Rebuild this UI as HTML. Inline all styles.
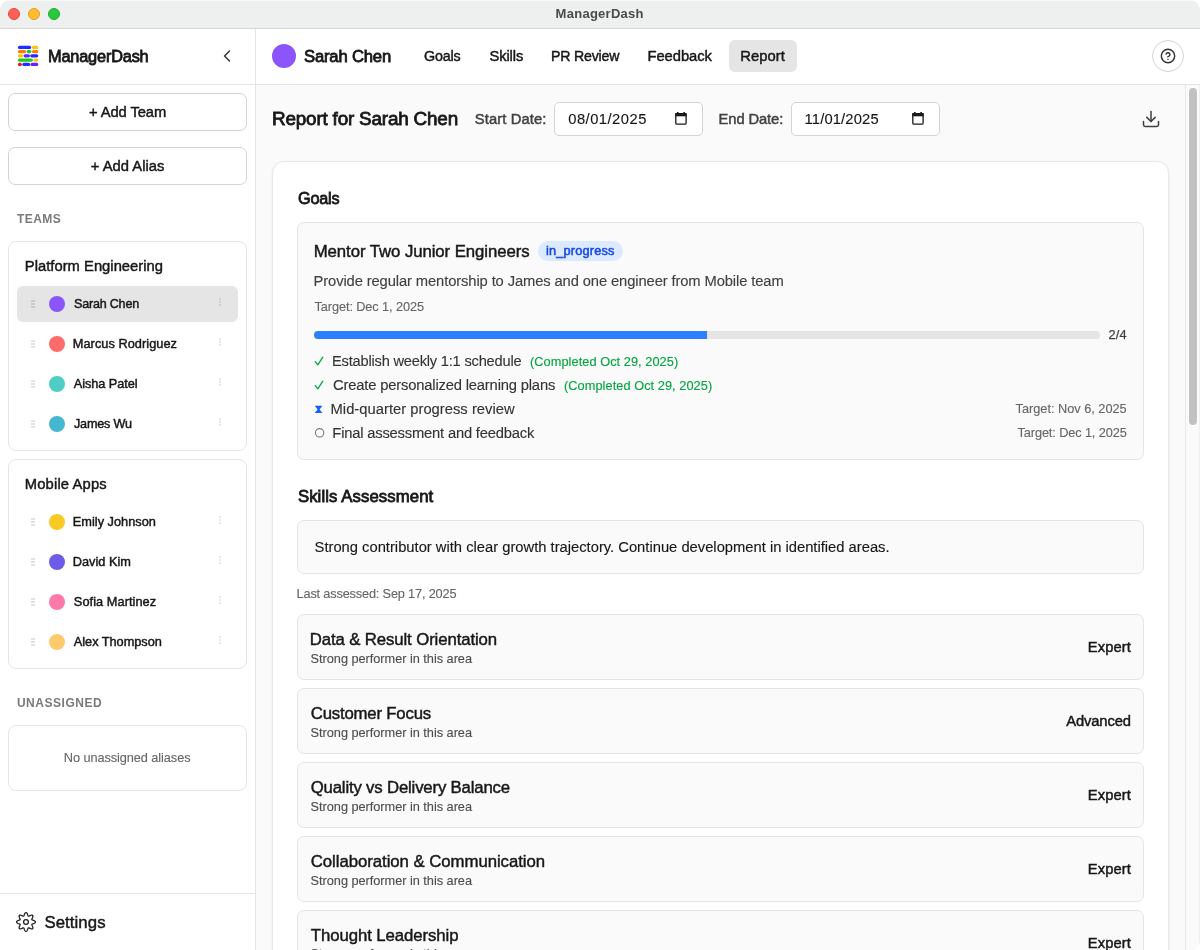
<!DOCTYPE html>
<html><head><meta charset="utf-8"><title>ManagerDash</title>
<style>
html,body{margin:0;padding:0;background:#fff;}
body{width:1200px;height:950px;overflow:hidden;font-family:"Liberation Sans",sans-serif;}
#win{will-change:transform;position:absolute;left:0;top:0;width:1200px;height:950px;overflow:hidden;border-radius:10px;background:#fff;}
#win div,#win svg,#win span{position:absolute;box-sizing:border-box;}
.t{transform-origin:0 0;white-space:nowrap;line-height:1;font-family:"Liberation Sans",sans-serif;}
#tb{left:0;top:0;width:1200px;height:28px;background:#eef0ef;box-shadow:inset 0 1px 0 rgba(255,255,255,0.55);}
#tbl{left:0;top:28px;width:1200px;height:1px;background:#d4d5d5;}
.tl{top:8px;width:12px;height:12px;border-radius:50%;}
#side{left:0;top:29px;width:256px;height:921px;background:#fff;border-right:1px solid #e5e5e5;}
#sideh{left:0;top:84px;width:255px;height:1px;background:#e5e5e5;}
#sidef{left:0;top:893px;width:255px;height:1px;background:#e5e5e5;}
.btn{left:8px;width:239px;height:38px;border:1px solid #d4d4d4;border-radius:7px;background:#fff;}
.card{left:8px;width:239px;border:1px solid #e5e5e5;border-radius:8px;background:#fff;}
.av{width:16px;height:16px;border-radius:50%;left:49px;}
.grip{left:31px;width:4px;height:2px;background:rgba(0,0,0,0.115);}
.dot{left:219px;width:2px;height:2px;background:rgba(0,0,0,0.1);border-radius:0.5px;}
#sel{left:17px;top:286px;width:221px;height:36px;border-radius:6px;background:#e5e5e5;}
#mainh{left:256px;top:29px;width:944px;height:55px;background:#fff;}
#mainhl{left:256px;top:84px;width:944px;height:1px;background:#e5e5e5;}
#main{left:256px;top:85px;width:944px;height:865px;background:#fafafa;}
#sbt{left:1185px;top:85px;width:15px;height:865px;background:#fafafa;border-left:1px solid #e8e8e8;border-right:1px solid #efefef;}
#sbh{left:1189px;top:88px;width:8px;height:337px;border-radius:4px;background:#c1c1c1;box-shadow:0 0 0 1px rgba(255,255,255,0.7);}
#rep{left:729px;top:40px;width:68px;height:32px;border-radius:6px;background:#e5e5e5;}
#help{left:1152px;top:40px;width:32px;height:32px;border-radius:50%;border:1px solid #d4d4d4;background:#fff;}
.inp{top:102px;width:149px;height:34px;border:1px solid #d4d4d4;border-radius:5px;background:#fff;}
#bigcard{left:272px;top:161px;width:897px;height:900px;border:1px solid #e8e8e8;border-radius:12px;background:#fff;box-shadow:0 1px 3px rgba(0,0,0,0.07),0 1px 2px -1px rgba(0,0,0,0.07);}
.sub{left:297px;width:847px;border:1px solid #e5e5e5;border-radius:7px;background:#fafafa;}
#pbar{left:314px;top:331px;width:786px;height:8px;border-radius:4px;background:#e5e5e5;}
#pfill{left:314px;top:331px;width:393px;height:8px;border-radius:4px 0 0 4px;background:#2b7fff;}
#badge{left:538px;top:241px;width:85px;height:20px;border-radius:10px;background:#dbeafe;}

</style></head>
<body>
<div id="win">
<div id="tb"></div><div id="tbl"></div>
<div class="tl" style="left:8px;background:#fe5f57;border:0.5px solid #e2463f"></div>
<div class="tl" style="left:28px;background:#febc2e;border:0.5px solid #dfa023"></div>
<div class="tl" style="left:48px;background:#28c840;border:0.5px solid #1dad2b"></div>
<div id="side"></div><div id="sideh"></div><div id="sidef"></div>
<!-- logo -->
<svg style="left:17px;top:45px" width="22" height="22" viewBox="17 45 22 22">
 <g stroke-width="3.2" stroke-linecap="round" fill="none">
  <path d="M19.5 47.4H29.6" stroke="#1f2dff"/><path d="M33.5 47.4H36.7" stroke="#ffc400"/>
  <path d="M19.5 51.6H24.5" stroke="#ff7a00"/><path d="M28.2 51.6H29.8" stroke="#1fc91f"/><path d="M33.5 51.6H36.7" stroke="#ff7a00"/>
  <path d="M19.5 55.850H21.7" stroke="#ffc400"/><path d="M25.2 55.850H28.4" stroke="#6a1fff"/><path d="M31.8 55.850H36.7" stroke="#1f2dff"/>
  <path d="M19.5 60.1H31.4" stroke="#1fc91f"/><path d="M35.1 60.1H36.7" stroke="#ffc400"/>
  <path d="M19.5 64.4H20.3" stroke="#e0162b"/><path d="M23.9 64.4H28.6" stroke="#1f2dff"/><path d="M32.1 64.4H36.7" stroke="#6a1fff"/>
 </g>
</svg>
<!-- chevron left -->
<svg style="left:217px;top:46px" width="20" height="20" viewBox="0 0 24 24" fill="none" stroke="#333" stroke-width="1.75" stroke-linecap="round" stroke-linejoin="round"><path d="m15 18-6-6 6-6"/></svg>
<div class="btn" style="top:93px"></div>
<div class="btn" style="top:147px"></div>
<div class="card" style="top:241px;height:210px"></div>
<div class="card" style="top:459px;height:210px"></div>
<div class="card" style="top:725px;height:66px"></div>
<div id="sel"></div>
<div class="av" style="top:296px;background:#8b55fb"></div><div class="grip" style="top:300px"></div><div class="dot" style="top:297.8px"></div><div class="grip" style="top:303px"></div><div class="dot" style="top:301px"></div><div class="grip" style="top:306px"></div><div class="dot" style="top:304.2px"></div>
<div class="av" style="top:336px;background:#ff6b6b"></div><div class="grip" style="top:340px"></div><div class="dot" style="top:337.8px"></div><div class="grip" style="top:343px"></div><div class="dot" style="top:341px"></div><div class="grip" style="top:346px"></div><div class="dot" style="top:344.2px"></div>
<div class="av" style="top:376px;background:#4ecdc4"></div><div class="grip" style="top:380px"></div><div class="dot" style="top:377.8px"></div><div class="grip" style="top:383px"></div><div class="dot" style="top:381px"></div><div class="grip" style="top:386px"></div><div class="dot" style="top:384.2px"></div>
<div class="av" style="top:416px;background:#45b7d1"></div><div class="grip" style="top:420px"></div><div class="dot" style="top:417.8px"></div><div class="grip" style="top:423px"></div><div class="dot" style="top:421px"></div><div class="grip" style="top:426px"></div><div class="dot" style="top:424.2px"></div>
<div class="av" style="top:514px;background:#f9ca24"></div><div class="grip" style="top:518px"></div><div class="dot" style="top:515.8px"></div><div class="grip" style="top:521px"></div><div class="dot" style="top:519px"></div><div class="grip" style="top:524px"></div><div class="dot" style="top:522.2px"></div>
<div class="av" style="top:554px;background:#6c5ce7"></div><div class="grip" style="top:558px"></div><div class="dot" style="top:555.8px"></div><div class="grip" style="top:561px"></div><div class="dot" style="top:559px"></div><div class="grip" style="top:564px"></div><div class="dot" style="top:562.2px"></div>
<div class="av" style="top:594px;background:#fd79a8"></div><div class="grip" style="top:598px"></div><div class="dot" style="top:595.8px"></div><div class="grip" style="top:601px"></div><div class="dot" style="top:599px"></div><div class="grip" style="top:604px"></div><div class="dot" style="top:602.2px"></div>
<div class="av" style="top:634px;background:#fdcb6e"></div><div class="grip" style="top:638px"></div><div class="dot" style="top:635.8px"></div><div class="grip" style="top:641px"></div><div class="dot" style="top:639px"></div><div class="grip" style="top:644px"></div><div class="dot" style="top:642.2px"></div>


<!-- settings icon -->
<svg style="left:16px;top:912px" width="20" height="20" viewBox="0 0 20 20" fill="none" stroke="#1f1f1f" stroke-width="1.25" stroke-linejoin="round"><path d="M19.40 10.00 L19.25 10.48 L18.84 10.93 L18.23 11.30 L17.52 11.60 L16.83 11.83 L16.27 12.04 L15.91 12.27 L15.79 12.58 L15.88 12.99 L16.13 13.54 L16.45 14.19 L16.74 14.90 L16.91 15.59 L16.89 16.20 L16.65 16.65 L16.20 16.89 L15.59 16.91 L14.90 16.74 L14.19 16.45 L13.54 16.13 L12.99 15.88 L12.58 15.79 L12.27 15.91 L12.04 16.27 L11.83 16.83 L11.60 17.52 L11.30 18.23 L10.93 18.84 L10.48 19.25 L10.00 19.40 L9.52 19.25 L9.07 18.84 L8.70 18.23 L8.40 17.52 L8.17 16.83 L7.96 16.27 L7.73 15.91 L7.42 15.79 L7.01 15.88 L6.46 16.13 L5.81 16.45 L5.10 16.74 L4.41 16.91 L3.80 16.89 L3.35 16.65 L3.11 16.20 L3.09 15.59 L3.26 14.90 L3.55 14.19 L3.87 13.54 L4.12 12.99 L4.21 12.58 L4.09 12.27 L3.73 12.04 L3.17 11.83 L2.48 11.60 L1.77 11.30 L1.16 10.93 L0.75 10.48 L0.60 10.00 L0.75 9.52 L1.16 9.07 L1.77 8.70 L2.48 8.40 L3.17 8.17 L3.73 7.96 L4.09 7.73 L4.21 7.42 L4.12 7.01 L3.87 6.46 L3.55 5.81 L3.26 5.10 L3.09 4.41 L3.11 3.80 L3.35 3.35 L3.80 3.11 L4.41 3.09 L5.10 3.26 L5.81 3.55 L6.46 3.87 L7.01 4.12 L7.42 4.21 L7.73 4.09 L7.96 3.73 L8.17 3.17 L8.40 2.48 L8.70 1.77 L9.07 1.16 L9.52 0.75 L10.00 0.60 L10.48 0.75 L10.93 1.16 L11.30 1.77 L11.60 2.48 L11.83 3.17 L12.04 3.73 L12.27 4.09 L12.58 4.21 L12.99 4.12 L13.54 3.87 L14.19 3.55 L14.90 3.26 L15.59 3.09 L16.20 3.11 L16.65 3.35 L16.89 3.80 L16.91 4.41 L16.74 5.10 L16.45 5.81 L16.13 6.46 L15.88 7.01 L15.79 7.42 L15.91 7.73 L16.27 7.96 L16.83 8.17 L17.52 8.40 L18.23 8.70 L18.84 9.07 L19.25 9.52Z"/><circle cx="10" cy="10" r="2.4"/></svg>
<!-- main -->
<div id="mainh"></div><div id="mainhl"></div><div id="main"></div>
<div style="left:272px;top:44px;width:24px;height:24px;border-radius:50%;background:#8b55fb"></div>
<div id="rep"></div>
<div id="help"></div>
<svg style="left:1160px;top:48px" width="16" height="16" viewBox="0 0 24 24" fill="none" stroke="#333" stroke-width="2.2" stroke-linecap="round" stroke-linejoin="round"><circle cx="12" cy="12" r="10"/><path d="M9.090 9a3 3 0 0 1 5.830 1c0 2-3 3-3 3"/><path d="M12 17h.01"/></svg>
<div class="inp" style="left:554px"></div>
<div class="inp" style="left:791px"></div>
<svg class="cal" style="left:674px;top:111px" width="14" height="15" viewBox="674 111 14 15"><rect x="675.8" y="113.7" width="10.3" height="10.4" rx="1.2" fill="none" stroke="#1a1a1a" stroke-width="1.3"/><rect x="675.2" y="113.1" width="11.5" height="3.2" fill="#1a1a1a"/><rect x="677" y="112" width="1.6" height="2" fill="#1a1a1a"/><rect x="683.3" y="112" width="1.6" height="2" fill="#1a1a1a"/></svg>
<svg class="cal" style="left:911px;top:111px" width="14" height="15" viewBox="674 111 14 15"><rect x="675.8" y="113.7" width="10.3" height="10.4" rx="1.2" fill="none" stroke="#1a1a1a" stroke-width="1.3"/><rect x="675.2" y="113.1" width="11.5" height="3.2" fill="#1a1a1a"/><rect x="677" y="112" width="1.6" height="2" fill="#1a1a1a"/><rect x="683.3" y="112" width="1.6" height="2" fill="#1a1a1a"/></svg>
<!-- download -->
<svg style="left:1141px;top:109px" width="20" height="20" viewBox="0 0 24 24" fill="none" stroke="#404040" stroke-width="1.85" stroke-linecap="round" stroke-linejoin="round"><path d="M21 15v4a2 2 0 0 1-2 2H5a2 2 0 0 1-2-2v-4"/><path d="m7 10 5 5 5-5"/><path d="M12 15V3"/></svg>
<div id="bigcard"></div>
<div class="sub" style="top:222px;height:238px"></div>
<div id="badge"></div>
<div id="pbar"></div><div id="pfill"></div>
<!-- milestone icons -->
<svg style="left:313px;top:355px" width="12" height="12" viewBox="313 355 12 12" fill="none" stroke="#00a63e" stroke-width="1.3" stroke-linecap="round" stroke-linejoin="round"><path d="M315.2 361.6l2.6 3.2 5-7.600"/></svg>
<svg style="left:313px;top:379px" width="12" height="12" viewBox="313 355 12 12" fill="none" stroke="#00a63e" stroke-width="1.3" stroke-linecap="round" stroke-linejoin="round"><path d="M315.2 361.6l2.6 3.2 5-7.600"/></svg>
<svg style="left:313px;top:404px" width="12" height="12" viewBox="313 404 12 12"><path d="M314.800 405.800h7.600l-2.800 3.600 2.800 3.600h-7.600l2.800-3.600z" fill="#155dfc"/></svg>
<svg style="left:313px;top:427px" width="13" height="12" viewBox="313 427 13 12"><circle cx="319.600" cy="432.800" r="4.200" fill="none" stroke="#7a7a7a" stroke-width="1.100"/></svg>
<!-- skills -->
<div class="sub" style="top:520px;height:54px"></div>
<div class="sub" style="top:614px;height:66px"></div>
<div class="sub" style="top:688px;height:66px"></div>
<div class="sub" style="top:762px;height:66px"></div>
<div class="sub" style="top:836px;height:66px"></div>
<div class="sub" style="top:910px;height:66px"></div>
<div id="sbt"></div><div id="sbh"></div>

<span id="t0" class="t" style="left:555.60px;top:7.01px;font-size:13px;font-weight:700;color:#4a4a4a;letter-spacing:0.269px;">ManagerDash</span>
<span id="t1" class="t" style="left:48.01px;top:49.01px;font-size:16.75px;font-weight:400;color:#171717;letter-spacing:-0.200px;-webkit-text-stroke:0.8px #171717;transform:scaleX(0.9756);">ManagerDash</span>
<span id="t2" class="t" style="left:89.02px;top:105.01px;font-size:14.75px;font-weight:400;color:#171717;letter-spacing:-0.090px;-webkit-text-stroke:0.45px #171717;">+ Add Team</span>
<span id="t3" class="t" style="left:90.82px;top:159.01px;font-size:14.75px;font-weight:400;color:#171717;letter-spacing:0.012px;-webkit-text-stroke:0.45px #171717;">+ Add Alias</span>
<span id="t4" class="t" style="left:16.90px;top:213.00px;font-size:12px;font-weight:700;color:#7a7a7a;letter-spacing:0.451px;">TEAMS</span>
<span id="t5" class="t" style="left:24.83px;top:259.01px;font-size:14.75px;font-weight:400;color:#171717;letter-spacing:0.021px;-webkit-text-stroke:0.45px #171717;">Platform Engineering</span>
<span id="t6" class="t" style="left:73.82px;top:298.01px;font-size:12.75px;font-weight:400;color:#171717;letter-spacing:-0.200px;-webkit-text-stroke:0.45px #171717;transform:scaleX(0.9834);">Sarah Chen</span>
<span id="t7" class="t" style="left:72.82px;top:338.01px;font-size:12.75px;font-weight:400;color:#171717;letter-spacing:0.044px;-webkit-text-stroke:0.45px #171717;">Marcus Rodriguez</span>
<span id="t8" class="t" style="left:73.82px;top:378.01px;font-size:12.75px;font-weight:400;color:#171717;letter-spacing:-0.072px;-webkit-text-stroke:0.45px #171717;">Aisha Patel</span>
<span id="t9" class="t" style="left:73.82px;top:418.01px;font-size:12.75px;font-weight:400;color:#171717;letter-spacing:-0.200px;-webkit-text-stroke:0.45px #171717;transform:scaleX(0.9905);">James Wu</span>
<span id="t10" class="t" style="left:24.83px;top:477.01px;font-size:14.75px;font-weight:400;color:#171717;letter-spacing:0.147px;-webkit-text-stroke:0.45px #171717;">Mobile Apps</span>
<span id="t11" class="t" style="left:72.82px;top:516.01px;font-size:12.75px;font-weight:400;color:#171717;letter-spacing:0.010px;-webkit-text-stroke:0.45px #171717;">Emily Johnson</span>
<span id="t12" class="t" style="left:72.82px;top:556.01px;font-size:12.75px;font-weight:400;color:#171717;letter-spacing:-0.005px;-webkit-text-stroke:0.45px #171717;">David Kim</span>
<span id="t13" class="t" style="left:73.82px;top:596.01px;font-size:12.75px;font-weight:400;color:#171717;letter-spacing:0.063px;-webkit-text-stroke:0.45px #171717;">Sofia Martinez</span>
<span id="t14" class="t" style="left:73.82px;top:636.01px;font-size:12.75px;font-weight:400;color:#171717;letter-spacing:-0.027px;-webkit-text-stroke:0.45px #171717;">Alex Thompson</span>
<span id="t15" class="t" style="left:16.90px;top:697.00px;font-size:12px;font-weight:700;color:#7a7a7a;letter-spacing:0.528px;">UNASSIGNED</span>
<span id="t16" class="t" style="left:63.86px;top:752.01px;font-size:12.75px;font-weight:400;color:#666666;letter-spacing:-0.082px;-webkit-text-stroke:0.12px #666666;">No unassigned aliases</span>
<span id="t17" class="t" style="left:44.43px;top:915.01px;font-size:16.75px;font-weight:400;color:#171717;letter-spacing:0.085px;-webkit-text-stroke:0.45px #171717;">Settings</span>
<span id="t18" class="t" style="left:304.20px;top:49.01px;font-size:16.75px;font-weight:400;color:#171717;letter-spacing:-0.200px;-webkit-text-stroke:0.8px #171717;transform:scaleX(0.9956);">Sarah Chen</span>
<span id="t19" class="t" style="left:424.02px;top:49.01px;font-size:14.75px;font-weight:400;color:#171717;letter-spacing:-0.200px;-webkit-text-stroke:0.45px #171717;transform:scaleX(0.9703);">Goals</span>
<span id="t20" class="t" style="left:489.43px;top:49.01px;font-size:14.75px;font-weight:400;color:#171717;letter-spacing:-0.099px;-webkit-text-stroke:0.45px #171717;">Skills</span>
<span id="t21" class="t" style="left:551.06px;top:49.01px;font-size:14.75px;font-weight:400;color:#171717;letter-spacing:-0.200px;-webkit-text-stroke:0.45px #171717;transform:scaleX(0.9585);">PR Review</span>
<span id="t22" class="t" style="left:647.43px;top:49.01px;font-size:14.75px;font-weight:400;color:#171717;letter-spacing:-0.037px;-webkit-text-stroke:0.45px #171717;">Feedback</span>
<span id="t23" class="t" style="left:740.23px;top:49.01px;font-size:14.75px;font-weight:400;color:#171717;letter-spacing:0.073px;-webkit-text-stroke:0.45px #171717;">Report</span>
<span id="t24" class="t" style="left:272.40px;top:109.01px;font-size:19px;font-weight:400;color:#171717;letter-spacing:-0.200px;-webkit-text-stroke:0.8px #171717;transform:scaleX(0.9946);">Report for Sarah Chen</span>
<span id="t25" class="t" style="left:474.73px;top:112.01px;font-size:14.75px;font-weight:400;color:#404040;letter-spacing:0.113px;-webkit-text-stroke:0.45px #404040;">Start Date:</span>
<span id="t26" class="t" style="left:568.26px;top:112.01px;font-size:14.75px;font-weight:400;color:#171717;letter-spacing:0.473px;-webkit-text-stroke:0.12px #171717;">08/01/2025</span>
<span id="t27" class="t" style="left:718.62px;top:112.01px;font-size:14.75px;font-weight:400;color:#404040;letter-spacing:-0.120px;-webkit-text-stroke:0.45px #404040;">End Date:</span>
<span id="t28" class="t" style="left:804.56px;top:112.01px;font-size:14.75px;font-weight:400;color:#171717;letter-spacing:0.150px;-webkit-text-stroke:0.12px #171717;">11/01/2025</span>
<span id="t29" class="t" style="left:297.89px;top:191.01px;font-size:16.75px;font-weight:400;color:#171717;letter-spacing:-0.200px;-webkit-text-stroke:0.8px #171717;transform:scaleX(0.9680);">Goals</span>
<span id="t30" class="t" style="left:313.73px;top:244.01px;font-size:16.75px;font-weight:400;color:#171717;letter-spacing:-0.063px;-webkit-text-stroke:0.45px #171717;">Mentor Two Junior Engineers</span>
<span id="t31" class="t" style="left:546.05px;top:245.01px;font-size:12.75px;font-weight:400;color:#1447e6;letter-spacing:0.165px;-webkit-text-stroke:0.5px #1447e6;">in_progress</span>
<span id="t32" class="t" style="left:313.56px;top:274.01px;font-size:14.75px;font-weight:400;color:#404040;letter-spacing:-0.115px;-webkit-text-stroke:0.12px #404040;">Provide regular mentorship to James and one engineer from Mobile team</span>
<span id="t33" class="t" style="left:314.56px;top:301.01px;font-size:12.75px;font-weight:400;color:#666666;letter-spacing:-0.101px;-webkit-text-stroke:0.12px #666666;">Target: Dec 1, 2025</span>
<span id="t34" class="t" style="left:1108.42px;top:329.01px;font-size:12.75px;font-weight:400;color:#404040;letter-spacing:0.253px;-webkit-text-stroke:0.25px #404040;">2/4</span>
<span id="t35" class="t" style="left:332.07px;top:354.01px;font-size:14.75px;font-weight:400;color:#333333;letter-spacing:-0.200px;-webkit-text-stroke:0.12px #333333;transform:scaleX(0.9916);">Establish weekly 1:1 schedule</span>
<span id="t36" class="t" style="left:530.06px;top:356.01px;font-size:12.75px;font-weight:400;color:#00a63e;letter-spacing:0.062px;-webkit-text-stroke:0.12px #00a63e;">(Completed Oct 29, 2025)</span>
<span id="t37" class="t" style="left:333.06px;top:378.01px;font-size:14.75px;font-weight:400;color:#333333;letter-spacing:-0.173px;-webkit-text-stroke:0.12px #333333;">Create personalized learning plans</span>
<span id="t38" class="t" style="left:564.06px;top:380.01px;font-size:12.75px;font-weight:400;color:#00a63e;letter-spacing:0.062px;-webkit-text-stroke:0.12px #00a63e;">(Completed Oct 29, 2025)</span>
<span id="t39" class="t" style="left:330.56px;top:402.01px;font-size:14.75px;font-weight:400;color:#333333;letter-spacing:0.016px;-webkit-text-stroke:0.12px #333333;">Mid-quarter progress review</span>
<span id="t40" class="t" style="left:332.36px;top:426.01px;font-size:14.75px;font-weight:400;color:#333333;letter-spacing:-0.196px;-webkit-text-stroke:0.12px #333333;">Final assessment and feedback</span>
<span id="t41" class="t" style="left:1015.56px;top:403.01px;font-size:12.75px;font-weight:400;color:#666666;letter-spacing:-0.006px;-webkit-text-stroke:0.12px #666666;">Target: Nov 6, 2025</span>
<span id="t42" class="t" style="left:1017.56px;top:427.01px;font-size:12.75px;font-weight:400;color:#666666;letter-spacing:-0.117px;-webkit-text-stroke:0.12px #666666;">Target: Dec 1, 2025</span>
<span id="t43" class="t" style="left:297.90px;top:489.01px;font-size:16.75px;font-weight:400;color:#171717;letter-spacing:0.082px;-webkit-text-stroke:0.8px #171717;">Skills Assessment</span>
<span id="t44" class="t" style="left:314.56px;top:540.01px;font-size:14.75px;font-weight:400;color:#171717;letter-spacing:-0.003px;-webkit-text-stroke:0.12px #171717;">Strong contributor with clear growth trajectory. Continue development in identified areas.</span>
<span id="t45" class="t" style="left:296.56px;top:588.01px;font-size:12.75px;font-weight:400;color:#666666;letter-spacing:-0.172px;-webkit-text-stroke:0.12px #666666;">Last assessed: Sep 17, 2025</span>
<span id="t46" class="t" style="left:309.73px;top:632.01px;font-size:16.75px;font-weight:400;color:#171717;letter-spacing:-0.107px;-webkit-text-stroke:0.45px #171717;">Data &amp; Result Orientation</span>
<span id="t47" class="t" style="left:310.56px;top:653.01px;font-size:12.75px;font-weight:400;color:#4d4d4d;letter-spacing:-0.029px;-webkit-text-stroke:0.12px #4d4d4d;">Strong performer in this area</span>
<span id="t48" class="t" style="left:1087.72px;top:640.01px;font-size:14.75px;font-weight:400;color:#171717;letter-spacing:0.101px;-webkit-text-stroke:0.45px #171717;">Expert</span>
<span id="t49" class="t" style="left:310.73px;top:706.01px;font-size:16.75px;font-weight:400;color:#171717;letter-spacing:-0.188px;-webkit-text-stroke:0.45px #171717;">Customer Focus</span>
<span id="t50" class="t" style="left:310.56px;top:727.01px;font-size:12.75px;font-weight:400;color:#4d4d4d;letter-spacing:-0.029px;-webkit-text-stroke:0.12px #4d4d4d;">Strong performer in this area</span>
<span id="t51" class="t" style="left:1066.22px;top:714.01px;font-size:14.75px;font-weight:400;color:#171717;letter-spacing:-0.122px;-webkit-text-stroke:0.45px #171717;">Advanced</span>
<span id="t52" class="t" style="left:310.73px;top:780.01px;font-size:16.75px;font-weight:400;color:#171717;letter-spacing:-0.173px;-webkit-text-stroke:0.45px #171717;">Quality vs Delivery Balance</span>
<span id="t53" class="t" style="left:310.56px;top:801.01px;font-size:12.75px;font-weight:400;color:#4d4d4d;letter-spacing:-0.029px;-webkit-text-stroke:0.12px #4d4d4d;">Strong performer in this area</span>
<span id="t54" class="t" style="left:1087.72px;top:788.01px;font-size:14.75px;font-weight:400;color:#171717;letter-spacing:0.101px;-webkit-text-stroke:0.45px #171717;">Expert</span>
<span id="t55" class="t" style="left:310.73px;top:854.01px;font-size:16.75px;font-weight:400;color:#171717;letter-spacing:-0.042px;-webkit-text-stroke:0.45px #171717;">Collaboration &amp; Communication</span>
<span id="t56" class="t" style="left:310.56px;top:875.01px;font-size:12.75px;font-weight:400;color:#4d4d4d;letter-spacing:-0.029px;-webkit-text-stroke:0.12px #4d4d4d;">Strong performer in this area</span>
<span id="t57" class="t" style="left:1087.72px;top:862.01px;font-size:14.75px;font-weight:400;color:#171717;letter-spacing:0.101px;-webkit-text-stroke:0.45px #171717;">Expert</span>
<span id="t58" class="t" style="left:310.73px;top:928.01px;font-size:16.75px;font-weight:400;color:#171717;letter-spacing:-0.067px;-webkit-text-stroke:0.45px #171717;">Thought Leadership</span>
<span id="t59" class="t" style="left:310.56px;top:948.01px;font-size:12.75px;font-weight:400;color:#4d4d4d;letter-spacing:-0.029px;-webkit-text-stroke:0.12px #4d4d4d;">Strong performer in this area</span>
<span id="t60" class="t" style="left:1087.72px;top:936.01px;font-size:14.75px;font-weight:400;color:#171717;letter-spacing:0.101px;-webkit-text-stroke:0.45px #171717;">Expert</span>
</div>
</body></html>
